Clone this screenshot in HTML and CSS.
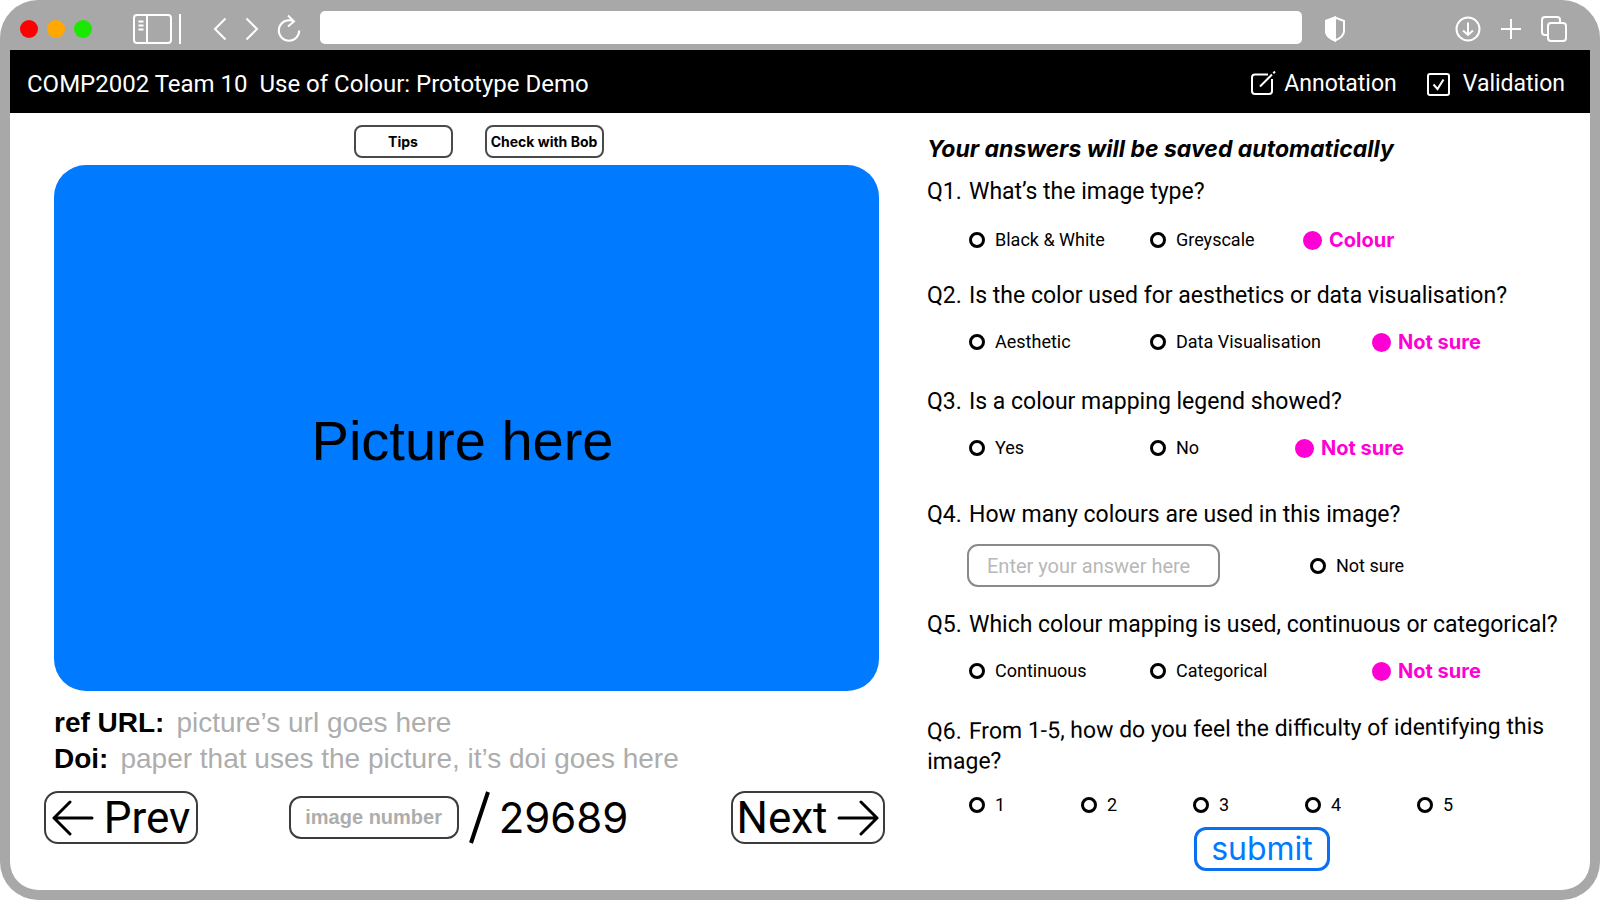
FILE: index.html
```html
<!DOCTYPE html>
<html lang="en">
<head>
<meta charset="utf-8">
<title>COMP2002 Team 10 Use of Colour: Prototype Demo</title>
<link rel="stylesheet" href="styles.css">
</head>
<body>
<div class="window">
  <div class="chrome">
    <div class="lights"><span class="light red"></span><span class="light amber"></span><span class="light green"></span></div>
    <button class="icon-btn sidebar" aria-label="Toggle sidebar">
      <svg width="50" height="32" viewBox="0 0 50 32" fill="none" stroke="#fff" stroke-width="2"><rect x="1" y="2" width="37" height="28" rx="3"/><path d="M14 2V30M5.500 8.500H10.500M5.500 12.500H10.500M5.500 16.500H10.500M47 1V31"/></svg>
    </button>
    <div class="history">
      <button class="icon-btn" aria-label="Back"><svg width="14" height="24" viewBox="0 0 14 24" fill="none" stroke="#fff" stroke-width="2"><path d="M12.500 1.500L2 12L12.500 22.500"/></svg></button>
      <button class="icon-btn" aria-label="Forward"><svg width="14" height="24" viewBox="0 0 14 24" fill="none" stroke="#fff" stroke-width="2"><path d="M1.500 1.500L12 12L1.500 22.500"/></svg></button>
      <button class="icon-btn" aria-label="Reload"><svg width="24" height="30" viewBox="0 0 24 30" fill="none" stroke="#fff" stroke-width="2"><path d="M17 7.500C15.500 6.700 13.500 6.300 12 6.300A10.200 10.200 0 1 0 22.200 16.500M11 1.500L17 7.500L11 12.500"/></svg></button>
    </div>
    <input class="address" type="text" aria-label="Address">
    <button class="icon-btn" aria-label="Privacy report"><svg width="20" height="26" viewBox="0 0 20 26" fill="none" stroke="#fff" stroke-width="2"><path d="M10 1.500L19 5V15C19 19 15 22.500 10 24.500C5 22.500 1 19 1 15V5Z"/><path d="M10 1.500L1 5V15C1 19 5 22.500 10 24.500Z" fill="#fff"/></svg></button>
    <div class="actions">
      <button class="icon-btn" aria-label="Downloads"><svg width="26" height="26" viewBox="0 0 26 26" fill="none" stroke="#fff" stroke-width="2"><circle cx="13" cy="13" r="11.500"/><path d="M13 6.500V19M8 14.500L13 19L18 14.500"/></svg></button>
      <button class="icon-btn" aria-label="New tab"><svg width="22" height="26" viewBox="0 0 22 26" fill="none" stroke="#fff" stroke-width="2"><path d="M11 3V23M1 13H21"/></svg></button>
      <button class="icon-btn" aria-label="Show tabs"><svg width="26" height="26" viewBox="0 0 26 26" fill="none" stroke="#fff" stroke-width="2"><path d="M7 19H4A3 3 0 0 1 1 16V4A3 3 0 0 1 4 1H16A3 3 0 0 1 19 4V7"/><rect x="7" y="7" width="18" height="18" rx="3"/></svg></button>
    </div>
  </div>

  <div class="page">
    <header class="topbar">
      <h1 class="title">COMP2002 Team 10&nbsp; Use of Colour: Prototype Demo</h1>
      <nav class="nav">
        <a class="nav-link" href="#annotation"><svg width="25" height="25" viewBox="0 0 25 25" fill="none" stroke="#fff" stroke-width="2"><path d="M17 3.500H4A3 3 0 0 0 1 6.500V20A3 3 0 0 0 4 23H18A3 3 0 0 0 21 20V8M9 15.500L21 3.500M22.300 2.200L24 .500"/></svg>Annotation</a>
        <a class="nav-link wide" href="#validation"><svg width="23" height="24" viewBox="0 0 23 24" fill="none" stroke="#fff" stroke-width="2"><rect x="1" y="2" width="21" height="21" rx="2"/><path d="M6.500 12.500L10.500 17L16.500 7.500"/></svg>Validation</a>
      </nav>
    </header>

    <main class="content">
      <section class="viewer">
        <div class="tools">
          <button class="tool">Tips</button>
          <button class="tool check">Check with Bob</button>
        </div>
        <div class="picture">Picture here</div>
        <dl class="refs">
          <div class="ref"><dt>ref URL:</dt><dd>picture’s url goes here</dd></div>
          <div class="ref"><dt>Doi:</dt><dd>paper that uses the picture, it’s doi goes here</dd></div>
        </dl>
        <div class="pager">
          <button class="step"><svg width="42" height="36" viewBox="0 0 42 36" fill="none" stroke="#000" stroke-width="3" stroke-linecap="round" stroke-linejoin="round"><path d="M40 18H2M18 2L2 18L18 34"/></svg>Prev</button>
          <div class="position">
            <input class="number" type="text" placeholder="image number" aria-label="Image number">
            <svg width="24" height="53" viewBox="0 0 24 53" stroke="#000" stroke-width="4"><path d="M21 1L4 52"/></svg>
            <span class="total">29689</span>
          </div>
          <button class="step">Next<svg width="42" height="36" viewBox="0 0 42 36" fill="none" stroke="#000" stroke-width="3" stroke-linecap="round" stroke-linejoin="round"><path d="M2 18H40M24 2L40 18L24 34"/></svg></button>
        </div>
      </section>

      <form class="survey">
        <p class="notice">Your answers will be saved automatically</p>
        <fieldset class="question first">
          <legend><span class="num">Q1.</span>What’s the image type?</legend>
          <div class="options third-mid">
            <label class="option"><input type="radio" name="q1">Black &amp; White</label>
            <label class="option"><input type="radio" name="q1">Greyscale</label>
            <label class="option"><input type="radio" name="q1" checked>Colour</label>
          </div>
        </fieldset>
        <fieldset class="question">
          <legend><span class="num">Q2.</span>Is the color used for aesthetics or data visualisation?</legend>
          <div class="options third-far">
            <label class="option"><input type="radio" name="q2">Aesthetic</label>
            <label class="option"><input type="radio" name="q2">Data Visualisation</label>
            <label class="option"><input type="radio" name="q2" checked>Not sure</label>
          </div>
        </fieldset>
        <fieldset class="question roomy">
          <legend><span class="num">Q3.</span>Is a colour mapping legend showed?</legend>
          <div class="options third-near">
            <label class="option"><input type="radio" name="q3">Yes</label>
            <label class="option"><input type="radio" name="q3">No</label>
            <label class="option"><input type="radio" name="q3" checked>Not sure</label>
          </div>
        </fieldset>
        <fieldset class="question tight">
          <legend><span class="num">Q4.</span>How many colours are used in this image?</legend>
          <div class="entry">
            <input class="answer" type="text" placeholder="Enter your answer here" aria-label="Number of colours">
            <label class="option"><input type="radio" name="q4">Not sure</label>
          </div>
        </fieldset>
        <fieldset class="question">
          <legend><span class="num">Q5.</span>Which colour mapping is used, continuous or categorical?</legend>
          <div class="options third-far">
            <label class="option"><input type="radio" name="q5">Continuous</label>
            <label class="option"><input type="radio" name="q5">Categorical</label>
            <label class="option"><input type="radio" name="q5" checked>Not sure</label>
          </div>
        </fieldset>
        <fieldset class="question last">
          <legend class="tilted"><span class="num">Q6.</span>From 1-5, how do you feel the difficulty of identifying this image?</legend>
          <div class="options scale">
            <label class="option"><input type="radio" name="q6">1</label>
            <label class="option"><input type="radio" name="q6">2</label>
            <label class="option"><input type="radio" name="q6">3</label>
            <label class="option"><input type="radio" name="q6">4</label>
            <label class="option"><input type="radio" name="q6">5</label>
          </div>
        </fieldset>
        <button class="submit" type="submit">submit</button>
      </form>
    </main>
  </div>
</div>
</body>
</html>
```
FILE: styles.css
```css
* { box-sizing: border-box; }

body {
  margin: 0;
  background: #fff;
  color: #000;
  font-family: Roboto, "Liberation Sans", sans-serif;
}

button, input { font-family: inherit; color: inherit; margin: 0; }
button { background: none; cursor: pointer; }
svg { display: block; flex: none; }

.window {
  min-height: 100vh;
  display: flex;
  flex-direction: column;
  padding: 0 10px 10px;
  background: #a8a8a8;
  border-radius: 38px;
}

/* Browser chrome */
.chrome { display: flex; align-items: center; height: 50px; padding: 8px 23px 0 10px; }
.lights { display: flex; gap: 9px; }
.light { width: 18px; height: 18px; border-radius: 50%; }
.red { background: #f00; }
.amber { background: #ffa800; }
.green { background: #1be800; }
.icon-btn { border: 0; padding: 0; }
.sidebar { margin-left: 41px; }
.history { display: flex; align-items: center; gap: 18px; margin: 0 19px 0 30px; }
.address {
  flex: 1;
  min-width: 0;
  height: 33px;
  margin: 0 23px 4px 0;
  padding: 0 12px;
  border: 0;
  border-radius: 5px;
  background: #fff;
}
.actions { display: flex; align-items: center; gap: 19px; margin-left: 110px; }

/* Page */
.page { flex: 1; display: flex; flex-direction: column; background: #fff; border-radius: 0 0 28px 28px; }
.topbar {
  display: flex;
  align-items: center;
  justify-content: space-between;
  min-height: 63px;
  padding: 4px 25px 0 17px;
  background: #000;
  color: #fff;
}
.title { margin: 0; font-size: 24px; font-weight: 400; line-height: 30px; }
.nav { display: flex; gap: 30px; }
.nav-link { display: flex; align-items: center; gap: 8px; color: inherit; font-size: 23px; line-height: 32px; text-decoration: none; }
.nav-link.wide { gap: 13px; }

.content {
  flex: 1;
  display: grid;
  grid-template-columns: 841fr 655fr;
  gap: 42px;
  padding: 12px 8px 0 34px;
}

/* Picture side */
.viewer { display: flex; flex-direction: column; padding-bottom: 46px; }
.tools { display: flex; justify-content: center; gap: 32px; padding-left: 28px; }
.tool {
  width: 99px;
  height: 33px;
  padding: 0;
  border: 2px solid #4a4a4a;
  border-radius: 8px;
  font-family: Inter, "Liberation Sans", sans-serif;
  font-size: 14px;
  font-weight: 700;
}
.tool.check { width: 119px; }
.picture {
  flex: 1;
  display: flex;
  align-items: center;
  justify-content: center;
  margin: 7px 6px 14px 10px;
  padding: 24px 8px 0 0;
  border-radius: 32px;
  background: #007aff;
  font-family: "Liberation Sans", Arial, sans-serif;
  font-size: 56px;
}
.refs { margin: 0 0 14px 10px; font-family: "Liberation Sans", Arial, sans-serif; font-size: 28px; line-height: 36px; }
.ref { display: flex; gap: 12px; }
.ref dt { font-weight: 700; }
.ref dd { margin: 0; color: #adadad; }

.pager { display: flex; align-items: center; justify-content: space-between; }
.step {
  display: flex;
  align-items: center;
  justify-content: center;
  gap: 10px;
  width: 154px;
  height: 53px;
  padding: 0;
  border: 2px solid #3c3c3c;
  border-radius: 14px;
  font-size: 44px;
  line-height: 48px;
}
.position { display: flex; align-items: center; gap: 8px; margin-right: 12px; }
.number {
  width: 170px;
  height: 43px;
  padding: 0 10px;
  border: 2px solid #3c3c3c;
  border-radius: 12px;
  font-family: "Liberation Sans", Arial, sans-serif;
  font-size: 20px;
  font-weight: 700;
  text-align: center;
}
.number::placeholder { color: #adadad; opacity: 1; }
.total { font-family: Inter, "Liberation Sans", sans-serif; font-size: 42px; line-height: 48px; }

/* Question side */
.survey { display: flex; flex-direction: column; }
.notice {
  margin: 9px 0 12px;
  font-family: Inter, "Liberation Sans", sans-serif;
  font-size: 23px;
  font-weight: 700;
  font-style: italic;
  line-height: 30px;
}
.question { margin: 0 0 32px; padding: 0; border: 0; min-width: 0; }
.question.first { margin-bottom: 28px; }
.question.first .options { margin-top: 21px; }
.question.roomy { margin-bottom: 39px; }
.question.tight { margin-bottom: 22px; }
.question.last { margin-bottom: 10px; }
legend { padding: 1px 0 0; font-size: 23px; line-height: 30px; }
.num { display: inline-block; width: 42px; }
.tilted { padding-top: 2px; transform: rotate(-0.5deg); transform-origin: left center; }

.options { display: grid; align-items: center; margin-top: 19px; padding-left: 42px; }
.third-near { grid-template-columns: 181px 145px auto; }
.third-mid { grid-template-columns: 181px 153px auto; }
.third-far { grid-template-columns: 181px 222px auto; }
.scale { grid-template-columns: repeat(5, 112px); margin-top: 16px; }

.option { display: flex; align-items: center; gap: 10px; height: 24px; font-size: 18px; line-height: 24px; white-space: nowrap; }
.option input {
  appearance: none;
  flex: none;
  width: 16px;
  height: 16px;
  border: 3px solid #000;
  border-radius: 50%;
}
.option:has(:checked) { gap: 7px; color: #ff00d4; font-family: Inter, "Liberation Sans", sans-serif; font-size: 20px; font-weight: 700; }
.option input:checked { width: 19px; height: 19px; border-color: #ff00d4; background: #ff00d4; }

.entry { display: flex; align-items: center; gap: 90px; margin-top: 14px; padding-left: 40px; }
.answer {
  width: 253px;
  height: 43px;
  padding: 0 18px;
  border: 2px solid #8a8a8a;
  border-radius: 11px;
  font-size: 20px;
}
.answer::placeholder { color: #b8b8b8; opacity: 1; }

.submit {
  width: 136px;
  height: 44px;
  margin-left: 267px;
  padding: 0;
  border: 3px solid #0a6ff0;
  border-radius: 12px;
  color: #007aff;
  font-family: Inter, "Liberation Sans", sans-serif;
  font-size: 32px;
  line-height: 36px;
}
```
